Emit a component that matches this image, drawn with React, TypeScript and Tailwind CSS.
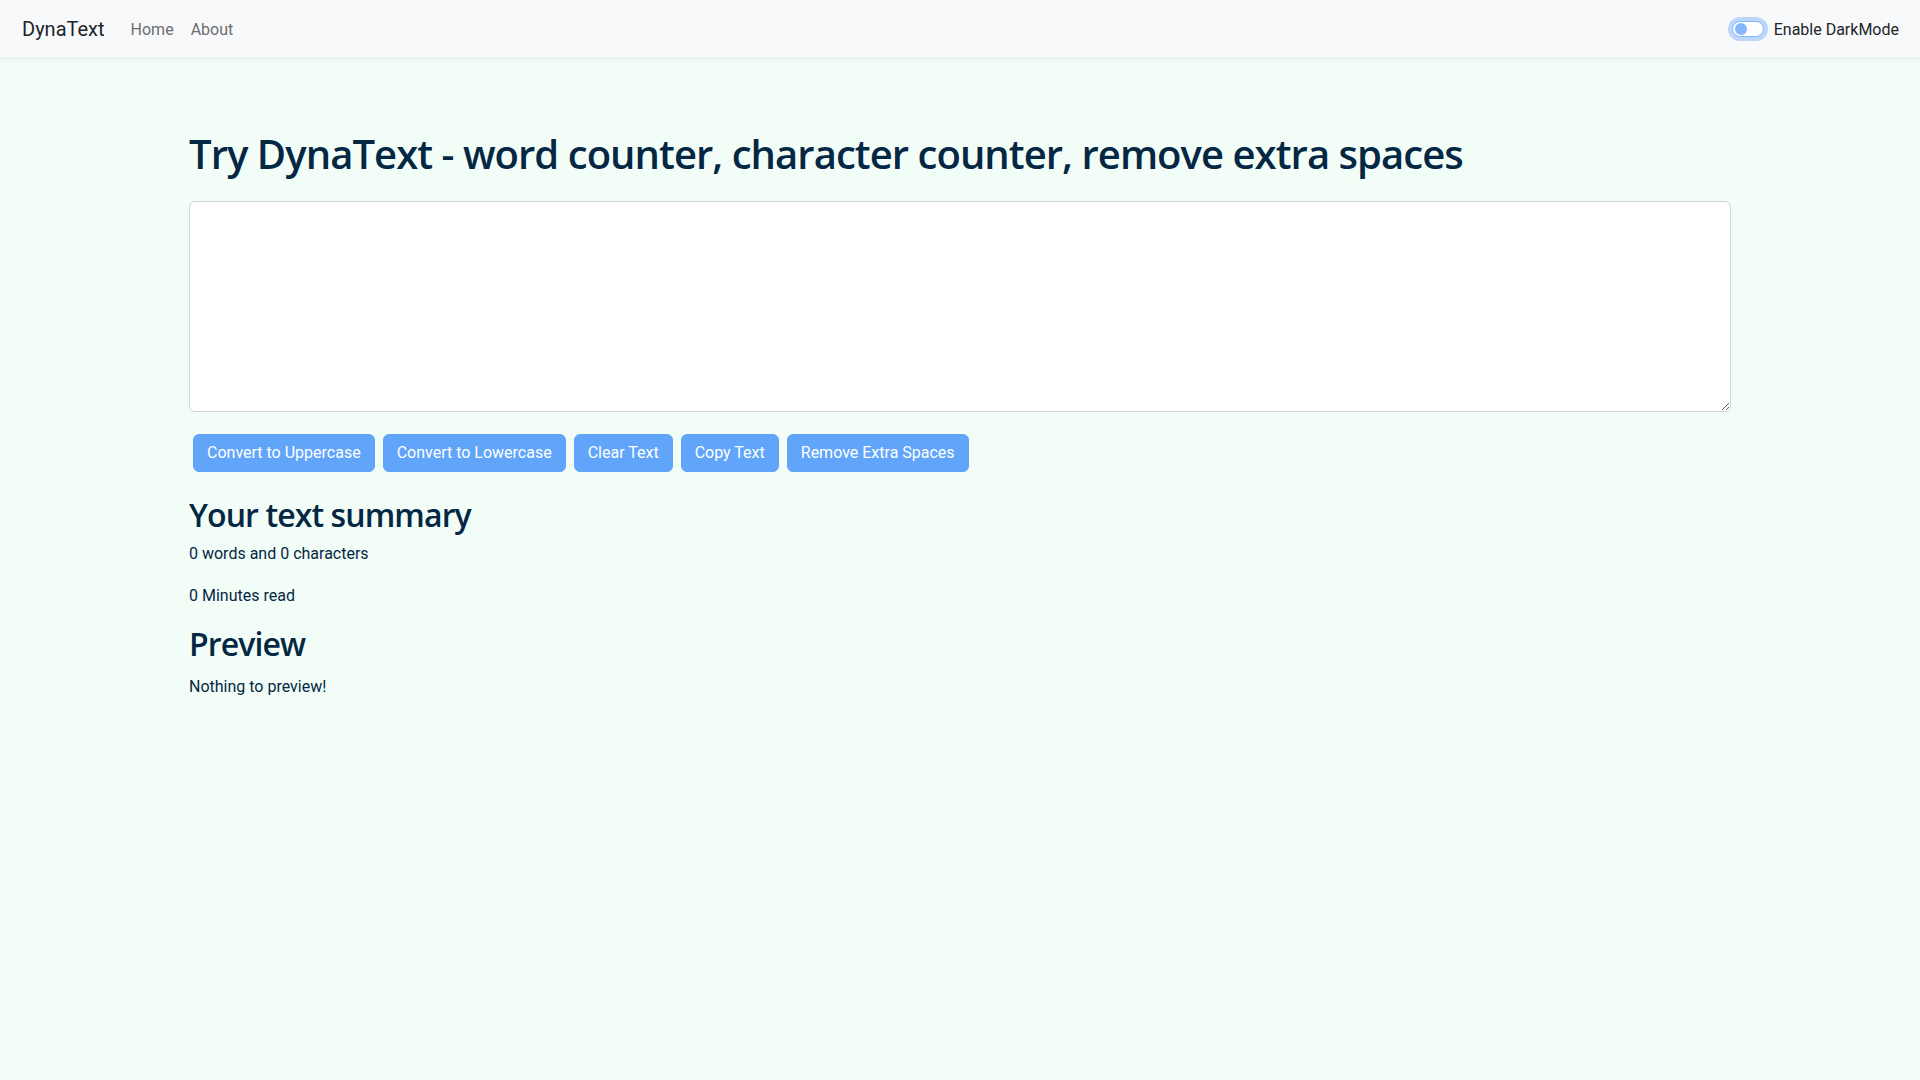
const buttons = [
  "Convert to Uppercase",
  "Convert to Lowercase",
  "Clear Text",
  "Copy Text",
  "Remove Extra Spaces",
];

function Navbar() {
  return (
    <nav className="h-[57px] bg-[#f8f9fa] shadow-[0_2px_4px_rgba(0,0,0,0.06)] flex items-center pl-[22px] pr-[21px] relative">
      <a className="text-xl text-[#212529]" href="#">
        DynaText
      </a>
      <div className="flex items-center gap-[17px] ml-[26px] pt-[3px] text-[#6b6d70]">
        <a href="#">Home</a>
        <a href="#">About</a>
      </div>
      <div className="ml-auto flex items-center gap-[10px]">
        <span className="w-8 h-4 rounded-full border border-[#86b7fe] bg-white ring-4 ring-[#0d6efd]/25 flex items-center px-[2px]">
          <span className="w-3 h-3 rounded-full bg-[#86b7fe]" />
        </span>
        <label className="text-[#212529] pt-[2px]">Enable DarkMode</label>
      </div>
    </nav>
  );
}

export default function App() {
  return (
    <div className="min-h-screen bg-[#f3fdf8] text-[#042743] font-['Roboto',sans-serif]">
      <Navbar />
      <div className="px-[189px] pt-[73px]">
        <h1 className="text-[40px] leading-[1.2] font-semibold tracking-[-0.95px] font-['Open_Sans',sans-serif]">
          Try DynaText - word counter, character counter, remove extra spaces
        </h1>
        <textarea className="mt-[23px] block w-full h-[211px] bg-white border border-[#ced4da] rounded-md outline-none" />
        <div className="mt-[22px] flex gap-2 pl-1">
          {buttons.map((b) => (
            <button
              key={b}
              className="px-[13px] py-1.5 border border-[#60a5fa] bg-[#60a5fa] text-white rounded-md"
            >
              {b}
            </button>
          ))}
        </div>
        <h2 className="mt-[24px] text-[32px] leading-[1.2] font-semibold tracking-[-0.9px] font-['Open_Sans',sans-serif]">
          Your text summary
        </h2>
        <p className="mt-2">0 words and 0 characters</p>
        <p className="mt-[18px]">0 Minutes read</p>
        <h2 className="mt-[17px] text-[32px] leading-[1.2] font-semibold tracking-[-0.9px] font-['Open_Sans',sans-serif]">
          Preview
        </h2>
        <p className="mt-[11px]">Nothing to preview!</p>
      </div>
    </div>
  );
}
